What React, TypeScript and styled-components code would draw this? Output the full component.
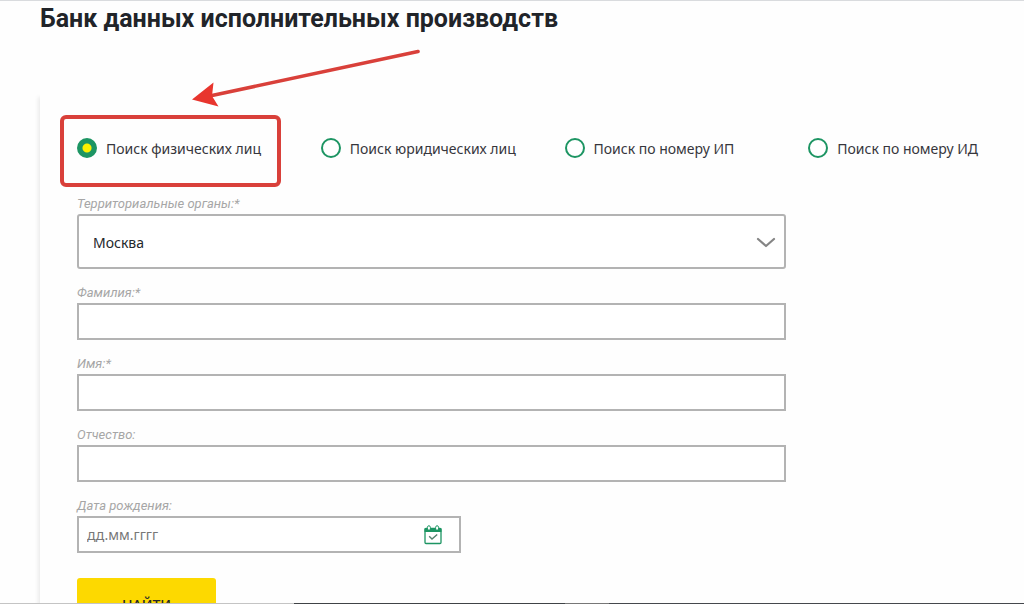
import React, { useState } from "react";
import styled, { createGlobalStyle } from "styled-components";

const textFont = '"Noto Sans", "Open Sans", sans-serif';
const displayFont = 'Roboto, "Liberation Sans", sans-serif';
const green = "#1d9563";
const red = "#d9403a";
const line = "#b3b3b3";

const GlobalStyle = createGlobalStyle`
  *, *::before, *::after { box-sizing: border-box; }
  body { margin: 0; background: #fefefe; color: #24272b; font-family: ${textFont}; font-size: 14px; }
  input, select, button { font: inherit; color: inherit; margin: 0; }
`;

const Page = styled.div`
  position: relative;
  height: 100vh;
  overflow: hidden;
  border-top: 1px solid #d9dbde;
  padding-left: 40px;
`;

const Title = styled.h1`
  margin: 0;
  font: 700 25px/36px ${displayFont};
  color: #212429;
`;

const Card = styled.form`
  margin-top: 56px;
  padding: 45px 2px 40px 37px;
  box-shadow: -2px 4px 4px rgba(0, 0, 0, 0.08);
`;

const SearchKinds = styled.fieldset`
  display: grid;
  grid-template-columns: repeat(4, 1fr);
  column-gap: 30px;
  margin: 0;
  padding: 0;
  border: 0;
`;

const Kind = styled.label`
  position: relative;
  display: flex;
  align-items: center;
  gap: 9px;
  height: 20px;
  white-space: nowrap;
  color: #36363c;
`;

const Radio = styled.input`
  appearance: none;
  flex: none;
  width: 20px;
  height: 20px;
  border: 2px solid ${green};
  border-radius: 50%;
  background: #fff;

  &:checked {
    background: radial-gradient(circle, #fbf000 4px, ${green} 5px);
    background-origin: border-box;
  }
`;

const Highlight = styled.span`
  position: absolute;
  left: -17px;
  top: -23px;
  width: 221px;
  height: 72px;
  border: 4px solid ${red};
  border-radius: 6px;
  pointer-events: none;
`;

const Arrow = styled.svg`
  position: absolute;
  left: 188px;
  top: 43px;
  width: 236px;
  height: 66px;
  pointer-events: none;
`;

const Fields = styled.div`
  display: flex;
  flex-direction: column;
  gap: 14px;
  width: 75%;
  margin-top: 36px;
`;

const Field = styled.div`
  display: flex;
  flex-direction: column;
`;

const Label = styled.label`
  font: italic 400 13px/20px ${displayFont};
  color: #a6a6a6;
`;

const TextInput = styled.input`
  width: 100%;
  height: 37px;
  padding: 0 8px;
  border: 2px solid ${line};
  border-radius: 0;
  background: #fff;
  outline: none;

  &::placeholder { color: #777; opacity: 1; }
`;

const SelectBox = styled.div`
  display: grid;
  align-items: center;

  > * { grid-area: 1 / 1; }
  > svg { justify-self: end; margin-right: 10px; pointer-events: none; }
`;

const Select = styled.select`
  appearance: none;
  width: 100%;
  height: 55px;
  padding: 2px 48px 0 14px;
  border: 2px solid ${line};
  border-radius: 3px;
  background: #fff;
  outline: none;
`;

const DateBox = styled.div`
  display: grid;
  align-items: center;
  max-width: 384px;

  > * { grid-area: 1 / 1; }
`;

const CalendarButton = styled.button`
  display: flex;
  justify-self: end;
  margin-right: 18px;
  padding: 0;
  border: 0;
  background: none;
`;

const Submit = styled.button`
  width: 139px;
  height: 52px;
  margin-top: 25px;
  border: 0;
  border-radius: 3px;
  background: #fdd900;
  text-transform: uppercase;
  font-weight: 500;
`;

const BottomEdge = styled.div`
  position: absolute;
  left: 0;
  right: 0;
  bottom: 0;
  display: flex;
  height: 1px;
`;

const Edge = styled.span<{ $share: number; $tone: string }>`
  flex: ${(p) => p.$share} 0 0;
  background: ${(p) => p.$tone};
`;

const kinds = [
  "Поиск физических лиц",
  "Поиск юридических лиц",
  "Поиск по номеру ИП",
  "Поиск по номеру ИД",
];

const names = [
  { id: "surname", label: "Фамилия:*" },
  { id: "name", label: "Имя:*" },
  { id: "patronymic", label: "Отчество:" },
];

const Chevron = () => (
  <svg width="20" height="12" viewBox="0 0 20 12" fill="none" stroke="#858585" strokeWidth="2.2" strokeLinecap="round" strokeLinejoin="round">
    <path d="M2 3 10 10 18 3" />
  </svg>
);

const Calendar = () => (
  <svg width="20" height="20" viewBox="0 0 20 20" fill="none">
    <path d="M2.5 3H17.5Q18.5 3 18.5 4V7H1.5V4Q1.5 3 2.5 3Z" fill={green} />
    <rect x="2" y="3.5" width="16" height="15" rx="1" stroke={green} strokeWidth="1.3" />
    <path d="M4.4 5V2.4Q4.6 0.7 5.9 0.7T7.4 2.4V5ZM12.6 5V2.4Q12.8 0.7 14.1 0.7T15.6 2.4V5Z" fill="#fff" stroke={green} strokeWidth="1" />
    <path d="M6.2 11.2 9 14 14.2 9.4" stroke="#55806e" strokeWidth="1.4" />
  </svg>
);

export default function App() {
  const [kind, setKind] = useState(0);
  return (
    <Page>
      <GlobalStyle />
      <Title>Банк данных исполнительных производств</Title>
      <Card onSubmit={(e) => e.preventDefault()}>
        <SearchKinds aria-label="Вид поиска">
          {kinds.map((text, i) => (
            <Kind key={text}>
              <Radio type="radio" name="kind" checked={kind === i} onChange={() => setKind(i)} />
              {text}
              {i === 0 && <Highlight />}
            </Kind>
          ))}
        </SearchKinds>
        <Fields>
          <Field>
            <Label htmlFor="region">Территориальные органы:*</Label>
            <SelectBox>
              <Select id="region">
                <option>Москва</option>
              </Select>
              <Chevron />
            </SelectBox>
          </Field>
          {names.map((f) => (
            <Field key={f.id}>
              <Label htmlFor={f.id}>{f.label}</Label>
              <TextInput id={f.id} type="text" />
            </Field>
          ))}
          <Field>
            <Label htmlFor="birth">Дата рождения:</Label>
            <DateBox>
              <TextInput id="birth" type="text" placeholder="дд.мм.гггг" />
              <CalendarButton type="button" aria-label="Календарь">
                <Calendar />
              </CalendarButton>
            </DateBox>
          </Field>
        </Fields>
        <Submit type="submit">Найти</Submit>
      </Card>
      <Arrow viewBox="0 0 236 66">
        <path d="M230 7.5 24 51.5" stroke={red} strokeWidth="3.6" strokeLinecap="round" />
        <path d="M4 55.5 25.5 38.5 24 52 30.5 62.5Z" fill="#e8352e" />
      </Arrow>
      <BottomEdge>
        <Edge $share={294} $tone="#c4c4c4" />
        <Edge $share={271} $tone="#3f4346" />
        <Edge $share={44} $tone="#777777" />
        <Edge $share={415} $tone="#45484d" />
      </BottomEdge>
    </Page>
  );
}
